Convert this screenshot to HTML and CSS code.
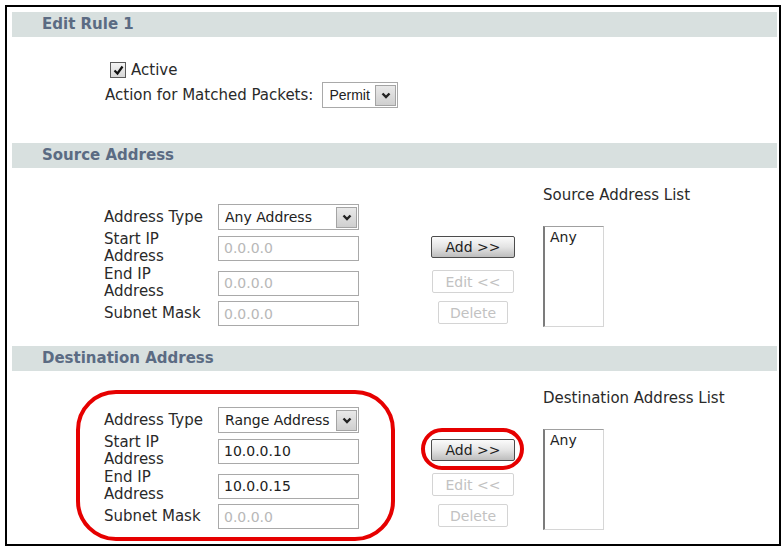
FILE: index.html
```html
<!DOCTYPE html>
<html lang="en">
<head>
    <meta charset="UTF-8">
    <title>Edit Rule 1</title>
    <link rel="stylesheet" href="styles.css">
</head>
<body>
    <div class="frame">
        <div class="bar">Edit Rule 1</div>
        <div class="rule-body">
            <div class="active-row">
                <span class="check">
                    <svg width="13" height="13" viewBox="0 0 13 13"><polyline points="2.5,6.5 5.5,9.5 10.5,2.5" fill="none" stroke="#111" stroke-width="2.2"/></svg>
                </span>
                Active
            </div>
            <div class="action-row">
                <span>Action for Matched Packets:</span>
                <div class="select select-small">
                    <span class="select-text">Permit</span>
                    <span class="arrow"><svg width="10" height="7" viewBox="0 0 10 7"><polyline points="1.5,1.5 5,5 8.5,1.5" fill="none" stroke="#222" stroke-width="2.4"/></svg></span>
                </div>
            </div>
        </div>

        <div class="bar">Source Address</div>
        <div class="addr-body">
            <div class="fields">
                <label>Address Type</label>
                <div class="select">
                    <span class="select-text">Any Address</span>
                    <span class="arrow"><svg width="10" height="7" viewBox="0 0 10 7"><polyline points="1.5,1.5 5,5 8.5,1.5" fill="none" stroke="#222" stroke-width="2.4"/></svg></span>
                </div>
                <label>Start IP<br>Address</label>
                <input class="field dim" value="0.0.0.0">
                <label>End IP<br>Address</label>
                <input class="field dim" value="0.0.0.0">
                <label>Subnet Mask</label>
                <input class="field dim" value="0.0.0.0">
            </div>
            <div class="buttons">
                <button class="btn-add">Add &gt;&gt;</button>
                <button class="btn-off btn-edit">Edit &lt;&lt;</button>
                <button class="btn-off btn-delete">Delete</button>
            </div>
            <div class="list-col">
                <div class="list-title">Source Address List</div>
                <div class="listbox">Any</div>
            </div>
        </div>

        <div class="bar">Destination Address</div>
        <div class="addr-body">
            <div class="fields">
                <label>Address Type</label>
                <div class="select">
                    <span class="select-text">Range Address</span>
                    <span class="arrow"><svg width="10" height="7" viewBox="0 0 10 7"><polyline points="1.5,1.5 5,5 8.5,1.5" fill="none" stroke="#222" stroke-width="2.4"/></svg></span>
                </div>
                <label>Start IP<br>Address</label>
                <input class="field" value="10.0.0.10">
                <label>End IP<br>Address</label>
                <input class="field" value="10.0.0.15">
                <label>Subnet Mask</label>
                <input class="field dim" value="0.0.0.0">
            </div>
            <div class="buttons">
                <button class="btn-add">Add &gt;&gt;</button>
                <button class="btn-off btn-edit">Edit &lt;&lt;</button>
                <button class="btn-off btn-delete">Delete</button>
            </div>
            <div class="list-col">
                <div class="list-title">Destination Address List</div>
                <div class="listbox">Any</div>
            </div>
        </div>

        <!-- red callouts -->
        <div class="mark mark-fields"></div>
        <div class="mark mark-add"></div>
    </div>
</body>
</html>
```

FILE: styles.css
```css
body {
    margin: 0;
    background: #fff;
    font-family: "DejaVu Sans", Verdana, sans-serif;
    font-size: 15px;
    color: #2a2a2a;
}
.frame {
    position: relative;
    box-sizing: border-box;
    width: 776px;
    height: 541px;
    margin: 5px;
    padding: 5px 2px 0 5px;
    border: 2px solid #000;
}
.bar {
    height: 25px;
    line-height: 25px;
    padding-left: 30px;
    background: #d8e0df;
    color: #5b6b83;
    font-weight: bold;
    font-size: 15px;
}

/* edit rule */
.rule-body {
    padding: 25px 0 35px 93px;
}
.active-row {
    display: flex;
    align-items: center;
    gap: 5px;
    height: 16px;
    padding-left: 5px;
    margin-bottom: 4px;
}
.check {
    display: flex;
    align-items: center;
    justify-content: center;
    box-sizing: border-box;
    width: 16px;
    height: 16px;
    border: 1px solid #5a5a5a;
    background: linear-gradient(#f4f4f4, #d6d6d6);
}
.action-row {
    display: flex;
    align-items: center;
    gap: 9px;
    height: 26px;
}

/* selects */
.select {
    display: flex;
    align-items: center;
    justify-content: space-between;
    box-sizing: border-box;
    height: 26px;
    border: 1px solid #a9a9a9;
    background: #fff;
    font-size: 14px;
    color: #222;
}
.select-text {
    padding-left: 6px;
}
.select-small {
    width: 76px;
}
.select-small .select-text {
    font-family: "Liberation Sans", Arial, sans-serif;
    font-size: 14px;
}
.arrow {
    display: flex;
    align-items: center;
    justify-content: center;
    box-sizing: border-box;
    width: 21px;
    height: 21px;
    margin-right: 1px;
    border: 1px solid #a4a4a4;
    background: linear-gradient(#e9e9e9, #cfcfcf);
}

/* address sections */
.addr-body {
    display: flex;
    align-items: flex-end;
    padding: 19px 0 19px 92px;
}
.fields {
    display: grid;
    grid-template-columns: 114px 141px;
    grid-template-rows: 26px 34px 34px 25px;
    row-gap: 1px;
    align-items: center;
    margin-bottom: 1px;
}
.fields label {
    line-height: 17px;
}
.fields .select {
    width: 141px;
}
.field {
    box-sizing: border-box;
    width: 141px;
    height: 25px;
    margin: 0;
    padding: 0 5px;
    border: 1px solid #a9a9a9;
    background: #fff;
    font-family: "DejaVu Sans", Verdana, sans-serif;
    font-size: 14px;
    color: #222;
}
.field.dim {
    color: #b8b8b8;
}
.buttons {
    display: flex;
    flex-direction: column;
    align-items: center;
    width: 84px;
    margin: 0 0 3px 72px;
}
button {
    box-sizing: border-box;
    margin: 0;
    padding: 0;
    font-family: "DejaVu Sans", Verdana, sans-serif;
    font-size: 14px;
    border-radius: 2px;
}
.btn-add {
    width: 84px;
    height: 22px;
    margin-bottom: 12px;
    border: 1px solid #4c4c4c;
    background: linear-gradient(#fbfbfb, #e4e4e4 50%, #bdbdbd);
    color: #1e1e1e;
}
.btn-off {
    height: 23px;
    border: 1px solid #d4d4d4;
    background: #fff;
    color: #c2c2c2;
}
.btn-edit { width: 82px; margin-bottom: 8px; }
.btn-delete { width: 70px; }

.list-col {
    margin-left: 28px;
}
.list-title {
    line-height: 17px;
    margin-bottom: 22px;
}
.listbox {
    box-sizing: border-box;
    width: 61px;
    height: 101px;
    padding: 2px 5px;
    border: 1px solid #d6d6d6;
    border-left: 2px solid #7c7c7c;
    border-top-color: #a0a0a0;
    font-size: 14px;
    color: #222;
}

/* red callouts */
.mark {
    position: absolute;
    box-sizing: border-box;
    border: 4px solid #e60000;
}
.mark-fields {
    left: 69px;
    top: 383px;
    width: 319px;
    height: 151px;
    border-radius: 40px;
}
.mark-add {
    left: 414px;
    top: 421px;
    width: 103px;
    height: 42px;
    border-radius: 21px;
}
```
